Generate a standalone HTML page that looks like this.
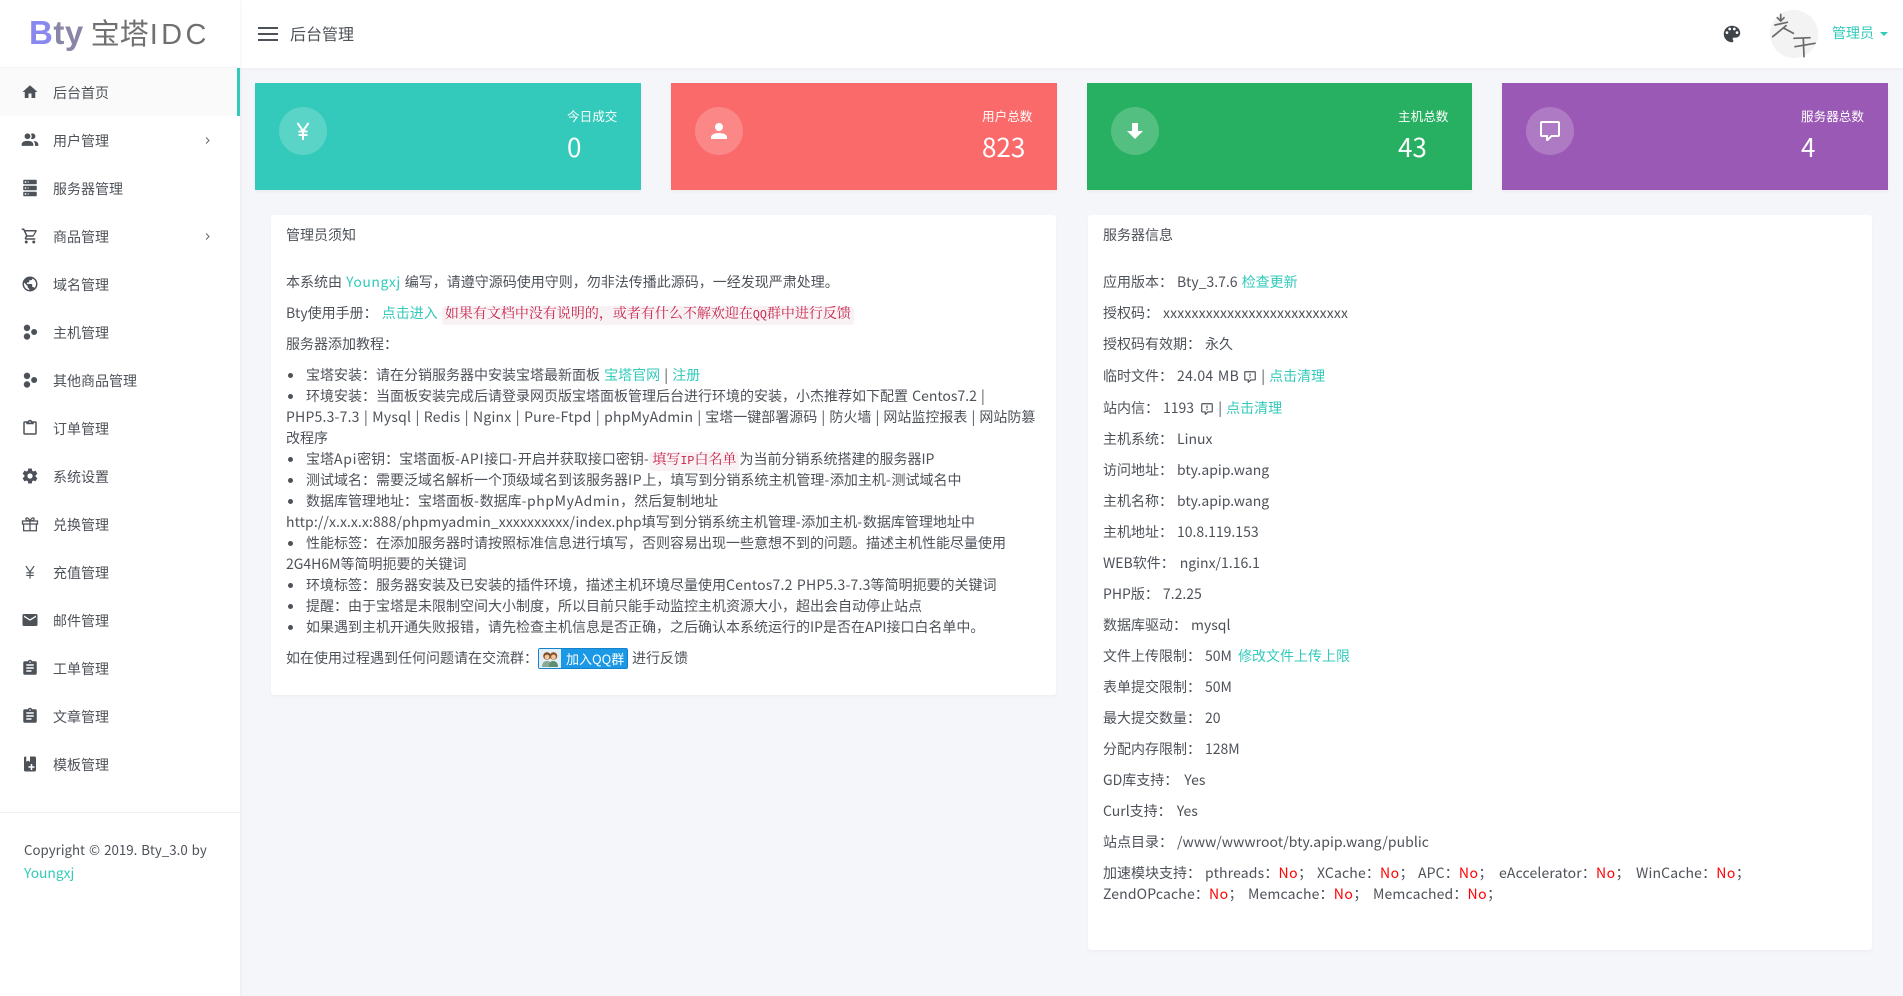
<!DOCTYPE html>
<html lang="zh"><head><meta charset="utf-8"><title>后台管理</title>
<style>
*{box-sizing:border-box}
html,body{margin:0;padding:0}
body{width:1903px;height:996px;position:relative;overflow:hidden;background:#f5f6fa;color:#4d5259;font:14px/21px "Noto Sans CJK SC","Liberation Sans",sans-serif;word-spacing:1px}
a{color:#33cabb;text-decoration:none}
.side{position:absolute;left:0;top:0;width:240px;height:996px;background:#fff;box-shadow:0 0 4px rgba(0,0,0,.07)}
.head{position:absolute;left:240px;top:0;width:1663px;height:68px;background:#fff;box-shadow:0 1px 3px rgba(0,0,0,.04)}
.logo{position:absolute;left:29px;top:10px;height:46px;white-space:nowrap;font-family:"Liberation Sans","Noto Sans CJK SC",sans-serif;color:#707070;font-size:29px;line-height:46px;word-spacing:0}
.logo b{font-size:33px;letter-spacing:.5px;color:#8a86a8;margin-right:7px}.logo b i{font-style:normal;color:#8888ee}
.item{position:absolute;left:0;width:240px;height:48px;line-height:48px;padding:1px 0 0 53px;white-space:nowrap;color:#4d5259}
.item svg{position:absolute;left:21px;top:15px;width:18px;height:18px;fill:#4d5259}
.item .ch{left:205px;top:21px;width:5px;height:7px;fill:none}
.on{background:#fafafa}.on:after{content:"";position:absolute;right:0;top:0;width:3px;height:48px;background:#33cabb}
.card{position:absolute;top:83px;width:386px;height:107px;color:#fff;box-shadow:0 2px 3px rgba(0,0,0,.04)}
.circ{position:absolute;left:24px;top:24px;width:48px;height:48px;border-radius:50%;background:rgba(255,255,255,.2)}
.circ svg{position:absolute;left:12px;top:12px;width:24px;height:24px;fill:#fff}
.cl{position:absolute;top:23px;font-size:12.6px;line-height:20px;white-space:nowrap}
.cv{position:absolute;top:46px;font-size:26px;line-height:36px;white-space:nowrap}
.panel{position:absolute;background:#fff;border-radius:3px;box-shadow:0 2px 3px rgba(0,0,0,.03)}
.l{position:absolute;white-space:nowrap;line-height:21px}
code{display:inline-block;height:19px;font:14px/19px "Liberation Mono","Noto Serif CJK SC",monospace;color:#c7254e;background:#f9f2f4;border-radius:4px;padding:0 3px}
code span{font-size:11.7px}
.d{display:inline-block;width:5px;height:5px;border-radius:50%;background:#4d5259;margin:0 13px 2px 2px;vertical-align:middle}
.no{color:#f00;letter-spacing:.5px}
.v{margin-left:4px}
.e{letter-spacing:.7px}
.ab{position:absolute;top:0;letter-spacing:.15px}
.qm{display:inline-block;vertical-align:-3px;width:14px;height:14px;margin:0 4px 0 2px}
.qq{position:absolute;left:538px;top:648px;width:90px;height:21px;border-radius:2px;background:#1b99e6;border:1px solid #1583c9;color:#fff;font-size:13px;line-height:19px;padding-left:27px;white-space:nowrap;word-spacing:0}
.qq i{position:absolute;left:0;top:0;width:22px;height:19px;background:#e3edf5}
.qq svg{position:absolute;left:1px;top:0;width:20px;height:19px}
</style></head><body>

<div class="head">
<svg style="position:absolute;left:18px;top:27px" width="20" height="14"><path d="M0 0h20v2H0zM0 6h20v2H0zM0 12h20v2H0z" fill="#4d5259"/></svg>
<div class="l" style="left:50px;top:23px;font-size:16px">后台管理</div>
<svg style="position:absolute;left:1481px;top:23px" width="22" height="22" viewBox="0 0 24 24"><path fill="#3f444b" d="M17.5 12a1.5 1.5 0 0 1-1.5-1.5A1.5 1.5 0 0 1 17.5 9a1.5 1.5 0 0 1 1.5 1.5 1.5 1.5 0 0 1-1.5 1.5m-3-4A1.5 1.5 0 0 1 13 6.5 1.5 1.5 0 0 1 14.5 5 1.5 1.5 0 0 1 16 6.5 1.5 1.5 0 0 1 14.5 8m-5 0A1.5 1.5 0 0 1 8 6.5 1.5 1.5 0 0 1 9.5 5 1.5 1.5 0 0 1 11 6.5 1.5 1.5 0 0 1 9.5 8m-3 4A1.5 1.5 0 0 1 5 10.5 1.5 1.5 0 0 1 6.5 9 1.5 1.5 0 0 1 8 10.5 1.5 1.5 0 0 1 6.5 12M12 3a9 9 0 0 0-9 9 9 9 0 0 0 9 9 1.5 1.5 0 0 0 1.5-1.5c0-.39-.15-.74-.39-1-.23-.27-.38-.62-.38-1a1.5 1.5 0 0 1 1.5-1.5H16a5 5 0 0 0 5-5c0-4.42-4.03-8-9-8z"/></svg>
<svg style="position:absolute;left:1530px;top:10px" width="48" height="48" viewBox="0 0 48 48"><circle cx="24" cy="24" r="24" fill="#f3f3f3"/><g fill="none" stroke="#6a6a6a" stroke-width="1.7" stroke-linecap="round"><path d="M10.7 4.3V11M7.3 7.7l3.4 3.3 3.3-3.3M5 15l12.3-2.7M2.7 26.7L16 15.7M14 18.3l9.3 5M24 28.3l16-.6M25 36.7l20-3.4M33.3 28.3l.7 18.4"/></g></svg>
<div class="l" style="left:1592px;top:23px;color:#33cabb">管理员</div>
<svg style="position:absolute;left:1640px;top:32px" width="8" height="4"><path d="M0 0h8L4 4z" fill="#33cabb"/></svg>
</div>

<div class="side">
<div class="logo"><b><i>B</i>ty</b>宝塔<span style="letter-spacing:3.4px;font-size:29px;margin-left:1px">IDC</span></div>
<div style="position:absolute;left:0;top:67px;width:240px;height:1px;background:#f3f3f3"></div>

<div class="item on" style="top:68px"><svg viewBox="0 0 24 24"><path d="M10 20v-6h4v6h5v-8h3L12 3 2 12h3v8z"/></svg>后台首页</div>
<div class="item" style="top:116px"><svg style="left:20px;top:14px;width:20px;height:20px" viewBox="0 0 24 24"><path d="M16 17v2H2v-2s0-4 7-4 7 4 7 4m-3.5-9.5A3.5 3.5 0 1 0 9 11a3.5 3.5 0 0 0 3.5-3.5m3.44 5.5A5.32 5.32 0 0 1 18 17v2h4v-2s0-3.63-6.06-4M15 4a3.39 3.39 0 0 0-1.93.59 5 5 0 0 1 0 5.82A3.39 3.39 0 0 0 15 11a3.5 3.5 0 0 0 0-7z"/></svg>用户管理<svg class="ch" viewBox="0 0 5 7"><path d="M1 .5l3 3-3 3" stroke="#666" fill="none"/></svg></div>
<div class="item" style="top:164px"><svg viewBox="0 0 24 24"><path fill-rule="evenodd" d="M4 1h16a1 1 0 0 1 1 1v4a1 1 0 0 1-1 1H4a1 1 0 0 1-1-1V2a1 1 0 0 1 1-1m0 8h16a1 1 0 0 1 1 1v4a1 1 0 0 1-1 1H4a1 1 0 0 1-1-1v-4a1 1 0 0 1 1-1m0 8h16a1 1 0 0 1 1 1v4a1 1 0 0 1-1 1H4a1 1 0 0 1-1-1v-4a1 1 0 0 1 1-1M9 5h1V3H9v2m0 8h1v-2H9v2m0 8h1v-2H9v2M5 3v2h2V3H5m0 8v2h2v-2H5m0 8v2h2v-2H5z"/></svg>服务器管理</div>
<div class="item" style="top:212px"><svg viewBox="0 0 24 24"><path d="M17 18a2 2 0 0 1 2 2 2 2 0 0 1-2 2 2 2 0 0 1-2-2c0-1.11.89-2 2-2M1 2h3.27l.94 2H20a1 1 0 0 1 1 1c0 .17-.05.34-.12.5l-3.58 6.47c-.34.61-1 1.03-1.75 1.03H8.1l-.9 1.63-.03.12a.25.25 0 0 0 .25.25H19v2H7a2 2 0 0 1-2-2c0-.35.09-.68.24-.96l1.36-2.45L3 4H1V2m6 16a2 2 0 0 1 2 2 2 2 0 0 1-2 2 2 2 0 0 1-2-2c0-1.11.89-2 2-2m9-7l2.78-5H6.14l2.36 5H16z"/></svg>商品管理<svg class="ch" viewBox="0 0 5 7"><path d="M1 .5l3 3-3 3" stroke="#666" fill="none"/></svg></div>
<div class="item" style="top:260px"><svg viewBox="0 0 24 24"><path d="M17.9 17.39c-.26-.8-1.01-1.39-1.9-1.39h-1v-3a1 1 0 0 0-1-1H8v-2h2a1 1 0 0 0 1-1V7h2a2 2 0 0 0 2-2v-.41a7.984 7.984 0 0 1 2.9 12.8M11 19.93c-3.95-.49-7-3.85-7-7.93 0-.62.08-1.22.21-1.79L9 15v1a2 2 0 0 0 2 2m1-16A10 10 0 0 0 2 12a10 10 0 0 0 10 10 10 10 0 0 0 10-10A10 10 0 0 0 12 2z"/></svg>域名管理</div>
<div class="item" style="top:308px"><svg viewBox="0 0 24 24"><circle cx="8" cy="6.5" r="4.3"/><circle cx="17.5" cy="12" r="4"/><circle cx="8" cy="18" r="4.3"/></svg>主机管理</div>
<div class="item" style="top:356px"><svg viewBox="0 0 24 24"><circle cx="8" cy="6.5" r="4.3"/><circle cx="17.5" cy="12" r="4"/><circle cx="8" cy="18" r="4.3"/></svg>其他商品管理</div>
<div class="item" style="top:404px"><svg viewBox="0 0 24 24"><path d="M19 3h-4.18C14.4 1.84 13.3 1 12 1c-1.3 0-2.4.84-2.82 2H5a2 2 0 0 0-2 2v14a2 2 0 0 0 2 2h14a2 2 0 0 0 2-2V5a2 2 0 0 0-2-2m-7 0a1 1 0 0 1 1 1 1 1 0 0 1-1 1 1 1 0 0 1-1-1 1 1 0 0 1 1-1M7 7h10V5h2v14H5V5h2v2z"/></svg>订单管理</div>
<div class="item" style="top:452px"><svg viewBox="0 0 24 24"><path d="M12 15.5A3.5 3.5 0 0 1 8.5 12 3.5 3.5 0 0 1 12 8.5a3.5 3.5 0 0 1 3.5 3.5 3.5 3.5 0 0 1-3.5 3.5m7.43-2.53c.04-.32.07-.64.07-.97 0-.33-.03-.66-.07-1l2.11-1.63c.19-.15.24-.42.12-.64l-2-3.46c-.12-.22-.39-.31-.61-.22l-2.49 1c-.52-.39-1.06-.73-1.69-.98l-.37-2.65A.506.506 0 0 0 14 2h-4c-.25 0-.46.18-.5.42l-.37 2.65c-.63.25-1.17.59-1.69.98l-2.49-1c-.22-.09-.49 0-.61.22l-2 3.46c-.13.22-.07.49.12.64L4.57 11c-.04.34-.07.67-.07 1 0 .33.03.65.07.97l-2.11 1.66c-.19.15-.25.42-.12.64l2 3.46c.12.22.39.3.61.22l2.49-1.01c.52.4 1.06.74 1.69.99l.37 2.65c.04.24.25.42.5.42h4c.25 0 .46-.18.5-.42l.37-2.65c.63-.26 1.17-.59 1.69-.99l2.49 1.01c.22.08.49 0 .61-.22l2-3.46c.12-.22.07-.49-.12-.64l-2.11-1.66z"/></svg>系统设置</div>
<div class="item" style="top:500px"><svg viewBox="0 0 24 24"><g fill="none" stroke="#4d5259" stroke-width="1.7"><path d="M2 8h20v4H2zM3.5 12v9h17v-9M12 8v13"/><path d="M12 8C10 3 6 3 6.5 5.5 7 7.5 10 8 12 8c2 0 5-.5 5.5-2.500C18 3 14 3 12 8z"/></g></svg>兑换管理</div>
<div class="item" style="top:548px"><svg viewBox="0 0 24 24"><path d="M6.5 4l5.5 8 5.5-8M12 12v9M7 13h10M7 16.5h10" fill="none" stroke="#4d5259" stroke-width="1.5"/></svg>充值管理</div>
<div class="item" style="top:596px"><svg viewBox="0 0 24 24"><path d="M20 8l-8 5-8-5V6l8 5 8-5m0-2H4c-1.11 0-2 .89-2 2v12a2 2 0 0 0 2 2h16a2 2 0 0 0 2-2V6a2 2 0 0 0-2-2z"/></svg>邮件管理</div>
<div class="item" style="top:644px"><svg viewBox="0 0 24 24"><path d="M17 9H7V7h10m0 6H7v-2h10m-3 6H7v-2h7M12 3a1 1 0 0 1 1 1 1 1 0 0 1-1 1 1 1 0 0 1-1-1 1 1 0 0 1 1-1m7 0h-4.18C14.4 1.84 13.3 1 12 1c-1.3 0-2.4.84-2.82 2H5a2 2 0 0 0-2 2v14a2 2 0 0 0 2 2h14a2 2 0 0 0 2-2V5a2 2 0 0 0-2-2z"/></svg>工单管理</div>
<div class="item" style="top:692px"><svg viewBox="0 0 24 24"><path d="M17 9H7V7h10m0 6H7v-2h10m-3 6H7v-2h7M12 3a1 1 0 0 1 1 1 1 1 0 0 1-1 1 1 1 0 0 1-1-1 1 1 0 0 1 1-1m7 0h-4.18C14.4 1.84 13.3 1 12 1c-1.3 0-2.4.84-2.82 2H5a2 2 0 0 0-2 2v14a2 2 0 0 0 2 2h14a2 2 0 0 0 2-2V5a2 2 0 0 0-2-2z"/></svg>文章管理</div>
<div class="item" style="top:740px"><svg viewBox="0 0 24 24"><path d="M18 22a2 2 0 0 0 2-2V4a2 2 0 0 0-2-2h-6v7L9.5 7.5 7 9V2H6a2 2 0 0 0-2 2v16a2 2 0 0 0 2 2z"/><path d="M13 12h2v3h3v2h-3v3h-2v-3h-3v-2h3z" fill="#fff"/></svg>模板管理</div>

<div style="position:absolute;left:0;top:812px;width:240px;height:1px;background:#f0f0f0"></div>
<div class="l" style="left:24px;top:839px;font-size:13.3px">Copyright © 2019. Bty_3.0 by</div>
<div class="l" style="left:24px;top:862px;font-size:13.8px"><a href="#">Youngxj</a></div>
</div>

<div class="card" style="left:255px;background:#33cabb"><div class="circ"><svg viewBox="0 0 24 24"><path d="M6.5 4l5.5 8 5.5-8M12 12v9M7.5 12.5h9M7.5 16h9" fill="none" stroke="#fff" stroke-width="2"/></svg></div><div class="cl" style="left:312px">今日成交</div><div class="cv" style="left:312px">0</div></div>
<div class="card" style="left:671px;background:#fb6a6a"><div class="circ"><svg viewBox="0 0 24 24"><path d="M12 4a4 4 0 0 1 4 4 4 4 0 0 1-4 4 4 4 0 0 1-4-4 4 4 0 0 1 4-4m0 10c4.42 0 8 1.79 8 4v2H4v-2c0-2.21 3.58-4 8-4z"/></svg></div><div class="cl" style="left:311px">用户总数</div><div class="cv" style="left:311px">823</div></div>
<div class="card" style="left:1087px;width:385px;background:#28b062"><div class="circ"><svg viewBox="0 0 24 24"><path d="M9 4h6v8h5l-8 8-8-8h5z"/></svg></div><div class="cl" style="left:311px">主机总数</div><div class="cv" style="left:311px">43</div></div>
<div class="card" style="left:1502px;background:#9b59b6"><div class="circ"><svg viewBox="0 0 24 24"><path d="M9 22a1 1 0 0 1-1-1v-3H4a2 2 0 0 1-2-2V4a2 2 0 0 1 2-2h16a2 2 0 0 1 2 2v12a2 2 0 0 1-2 2h-6.1l-3.7 3.71c-.2.19-.45.29-.7.29H9m1-6v3.08L13.08 16H20V4H4v12h6z"/></svg></div><div class="cl" style="left:299px">服务器总数</div><div class="cv" style="left:299px">4</div></div>

<div class="panel" style="left:271px;top:215px;width:785px;height:480px"></div>
<div class="panel" style="left:1088px;top:215px;width:784px;height:735px"></div>

<div class="l" style="left:286px;top:225px">管理员须知</div>
<div class="l" style="left:286px;top:272px">本系统由 <a href="#" style="letter-spacing:.5px">Youngxj</a> 编写，请遵守源码使用守则，勿非法传播此源码，一经发现严肃处理。</div>
<div class="l" style="left:286px;top:303px">Bty使用手册： <a href="#">点击进入</a> <code>如果有文档中没有说明的，或者有什么不解欢迎在<span>QQ</span>群中进行反馈</code></div>
<div class="l" style="left:286px;top:334px">服务器添加教程：</div>
<div class="l" style="left:286px;top:365px"><span class="d"></span>宝塔安装：请在分销服务器中安装宝塔最新面板 <a href="#">宝塔官网</a> | <a href="#">注册</a></div>
<div class="l" style="left:286px;top:386px"><span class="d"></span>环境安装：当面板安装完成后请登录网页版宝塔面板管理后台进行环境的安装，小杰推荐如下配置 Centos7.2 |</div>
<div class="l" style="left:286px;top:407px"><span style="letter-spacing:.2px">PHP5.3-7.3 | Mysql | Redis | Nginx | Pure-Ftpd | phpMyAdmin</span> | 宝塔一键部署源码 | 防火墙 | 网站监控报表 | 网站防篡</div>
<div class="l" style="left:286px;top:428px">改程序</div>
<div class="l" style="left:286px;top:449px"><span class="d"></span>宝塔<span class="e">Api</span>密钥：宝塔面板<span class="e">-API</span>接口<span class="e">-</span>开启并获取接口密钥<span class="e">-</span><code>填写<span>IP</span>白名单</code>为当前分销系统搭建的服务器IP</div>
<div class="l" style="left:286px;top:470px"><span class="d"></span>测试域名：需要泛域名解析一个顶级域名到该服务器<span class="e">IP</span>上，填写到分销系统主机管理<span class="e">-</span>添加主机<span class="e">-</span>测试域名中</div>
<div class="l" style="left:286px;top:491px"><span class="d"></span>数据库管理地址：宝塔面板<span class="e">-</span>数据库<span style="letter-spacing:.6px">-phpMyAdmin</span>，然后复制地址</div>
<div class="l" style="left:286px;top:512px"><span style="letter-spacing:.1px">http://x.x.x.x:888/phpmyadmin_xxxxxxxxxx/index.php</span>填写到分销系统主机管理<span class="e">-</span>添加主机<span class="e">-</span>数据库管理地址中</div>
<div class="l" style="left:286px;top:533px"><span class="d"></span>性能标签：在添加服务器时请按照标准信息进行填写，否则容易出现一些意想不到的问题。描述主机性能尽量使用</div>
<div class="l" style="left:286px;top:554px">2G4H6M等简明扼要的关键词</div>
<div class="l" style="left:286px;top:575px"><span class="d"></span>环境标签：服务器安装及已安装的插件环境，描述主机环境尽量使用<span style="letter-spacing:.2px">Centos7.2 PHP5.3-7.3</span>等简明扼要的关键词</div>
<div class="l" style="left:286px;top:596px"><span class="d"></span>提醒：由于宝塔是未限制空间大小制度，所以目前只能手动监控主机资源大小，超出会自动停止站点</div>
<div class="l" style="left:286px;top:617px"><span class="d"></span>如果遇到主机开通失败报错，请先检查主机信息是否正确，之后确认本系统运行的IP是否在API接口白名单中。</div>
<div class="l" style="left:286px;top:648px">如在使用过程遇到任何问题请在交流群：</div>
<span class="qq"><i></i><svg viewBox="0 0 20 19"><path d="M2 18c0-5 3-6 5-6s5 1 5 6z" fill="#8aa894"/><path d="M9 18c0-5 2-6 4-6s5 1 5 6z" fill="#5d8f6e"/><circle cx="7" cy="7" r="3.8" fill="#7a4a22"/><circle cx="13.5" cy="7" r="3.8" fill="#8a5526"/><circle cx="7" cy="8" r="2.4" fill="#f0c6a0"/><circle cx="13.5" cy="8" r="2.4" fill="#f0c6a0"/></svg>加入QQ群</span>
<div class="l" style="left:632px;top:648px">进行反馈</div>

<div class="l" style="left:1103px;top:225px">服务器信息</div>
<div class="l" style="left:1103px;top:272px">应用版本：<span class="v">Bty_3.7.6</span> <a href="#">检查更新</a></div>
<div class="l" style="left:1103px;top:303px">授权码：<span class="v" style="letter-spacing:.15px">xxxxxxxxxxxxxxxxxxxxxxxxxx</span></div>
<div class="l" style="left:1103px;top:334px">授权码有效期：<span class="v">永久</span></div>
<div class="l" style="left:1103px;top:366px">临时文件：<span class="v" style="letter-spacing:.3px">24.04 MB</span> <svg class="qm" style="margin-left:0" viewBox="0 0 24 24"><path fill="#4d5259" d="M9 22a1 1 0 0 1-1-1v-3H4a2 2 0 0 1-2-2V4a2 2 0 0 1 2-2h16a2 2 0 0 1 2 2v12a2 2 0 0 1-2 2h-6.1l-3.7 3.71c-.2.19-.45.29-.7.29H9m1-6v3.08L13.08 16H20V4H4v12h6zM11 6h2v5h-2zM11 12h2v2h-2z"/></svg>| <a href="#">点击清理</a></div>
<div class="l" style="left:1103px;top:398px">站内信：<span class="v">1193</span> <svg class="qm" viewBox="0 0 24 24"><path fill="#4d5259" d="M9 22a1 1 0 0 1-1-1v-3H4a2 2 0 0 1-2-2V4a2 2 0 0 1 2-2h16a2 2 0 0 1 2 2v12a2 2 0 0 1-2 2h-6.1l-3.7 3.71c-.2.19-.45.29-.7.29H9m1-6v3.08L13.08 16H20V4H4v12h6zM11 6h2v5h-2zM11 12h2v2h-2z"/></svg>| <a href="#">点击清理</a></div>
<div class="l" style="left:1103px;top:429px">主机系统：<span class="v">Linux</span></div>
<div class="l" style="left:1103px;top:460px">访问地址：<span class="v">bty.apip.wang</span></div>
<div class="l" style="left:1103px;top:491px">主机名称：<span class="v">bty.apip.wang</span></div>
<div class="l" style="left:1103px;top:522px">主机地址：<span class="v">10.8.119.153</span></div>
<div class="l" style="left:1103px;top:553px">WEB软件：<span class="v" style="margin-left:5px">nginx/1.16.1</span></div>
<div class="l" style="left:1103px;top:584px">PHP版：<span class="v">7.2.25</span></div>
<div class="l" style="left:1103px;top:615px">数据库驱动：<span class="v">mysql</span></div>
<div class="l" style="left:1103px;top:646px">文件上传限制：<span class="v">50M</span> <a href="#" style="margin-left:2px">修改文件上传上限</a></div>
<div class="l" style="left:1103px;top:677px">表单提交限制：<span class="v">50M</span></div>
<div class="l" style="left:1103px;top:708px">最大提交数量：<span class="v">20</span></div>
<div class="l" style="left:1103px;top:739px">分配内存限制：<span class="v">128M</span></div>
<div class="l" style="left:1103px;top:770px">GD库支持：<span class="v" style="margin-left:6px">Yes</span></div>
<div class="l" style="left:1103px;top:801px">Curl支持：<span class="v" style="margin-left:5px">Yes</span></div>
<div class="l" style="left:1103px;top:832px">站点目录：<span class="v" style="letter-spacing:.05px">/www/wwwroot/bty.apip.wang/public</span></div>
<div class="l" style="left:1103px;top:863px">加速模块支持：<span class="ab" style="left:102px">pthreads：<span class="no">No</span>；</span><span class="ab" style="left:214px">XCache：<span class="no">No</span>；</span><span class="ab" style="left:315px">APC：<span class="no">No</span>；</span><span class="ab" style="left:396px">eAccelerator：<span class="no">No</span>；</span><span class="ab" style="left:533px">WinCache：<span class="no">No</span>；</span></div>
<div class="l" style="left:1103px;top:884px">&#8203;<span class="ab" style="left:0">ZendOPcache：<span class="no">No</span>；</span><span class="ab" style="left:145px">Memcache：<span class="no">No</span>；</span><span class="ab" style="left:270px">Memcached：<span class="no">No</span>；</span></div>
</body></html>
